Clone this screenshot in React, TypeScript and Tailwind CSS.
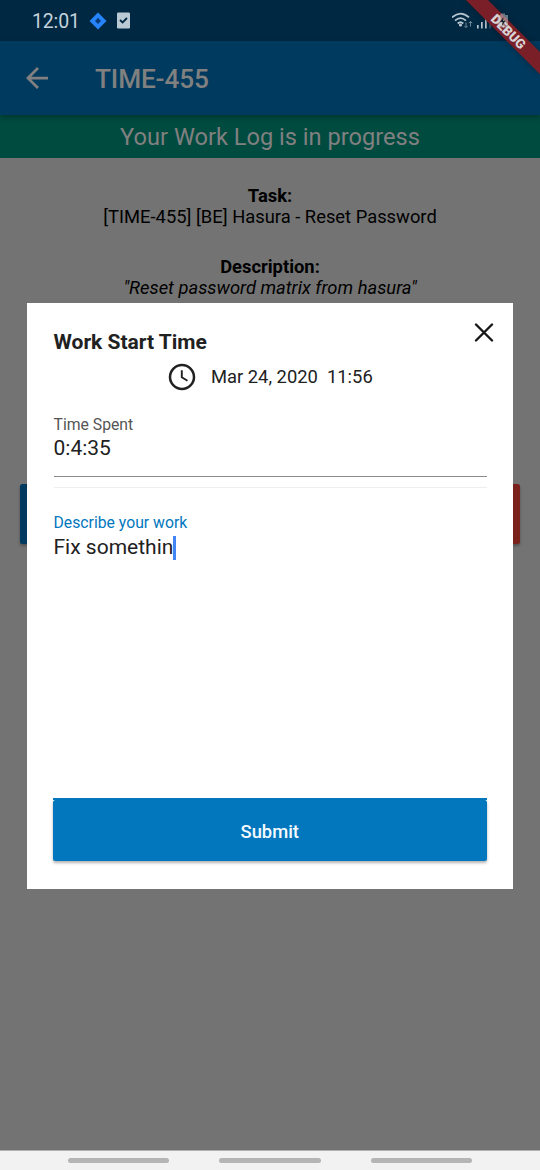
import React from "react";

function StatusBar() {
  return (
    <div className="flex h-[41px] items-center bg-[#002842] pl-8 pr-[28px] text-[#c4d2db]">
      <span className="w-[57px] pt-[3px] text-[19.5px] leading-none tracking-[-0.15px]">12:01</span>
      <svg width="18" height="18" viewBox="0 0 18 18">
        <path d="M9 .5 17.5 9 9 17.5 .5 9Z" fill="#2684ff" />
        <path d="M9 5.8 12 9 9 12 6 9Z" fill="#0a3c78" />
      </svg>
      <svg className="ml-[10px]" width="13" height="17" viewBox="0 0 13 17">
        <rect width="13" height="16" y="0.5" rx="1.3" fill="#b9cad5" />
        <path d="m3 8 2.6 2.5L10 6" fill="none" stroke="#002842" strokeWidth="1.8" />
      </svg>
      <svg className="ml-auto" width="60" height="20" viewBox="0 0 60 20">
        <g fill="none" stroke="#b5c4ce" strokeWidth="1.8">
          <path d="M0 6.400Q8.500 -1.200 17 6.400" />
          <path d="M3 9.700Q8.500 4.600 14 9.700" />
          <path d="M5.700 12.500Q8.500 10 11.300 12.500" />
        </g>
        <circle cx="8.500" cy="14" r="1.600" fill="#b5c4ce" />
        <path d="M14 11.500v5m-1.700-1.700 1.700 1.800 1.700-1.800M18.500 15.500v-5m-1.700 1.700 1.700-1.800 1.700 1.800" fill="none" stroke="#708797" strokeWidth="1" />
        <g fill="#b5c4ce">
          <rect x="25" y="14" width="1.700" height="3.500" />
          <rect x="29" y="11" width="1.700" height="6.500" />
          <rect x="33" y="7.500" width="1.700" height="10" />
          <rect x="37.500" y="3.500" width="1.200" height="14" fill="#526a7a" />
        </g>
      </svg>
    </div>
  );
}

function AppBar() {
  return (
    <div className="relative z-10 flex h-[74px] items-center bg-[#003a5e] pl-[26px] text-[#808080] shadow-[0_3px_5px_rgba(0,0,0,0.25)]">
      <svg width="22" height="22" viewBox="4 4 16 16" fill="#808080">
        <path d="M20 11H7.830l5.590-5.590L12 4l-8 8 8 8 1.410-1.410L7.830 13H20v-2z" />
      </svg>
      <h1 className="ml-[47px] pt-[3px] text-[26.250px] font-medium leading-none tracking-[-0.150px]">TIME-455</h1>
    </div>
  );
}

function DebugRibbon() {
  return (
    <svg className="absolute right-0 top-0 z-20" width="90" height="90" viewBox="0 0 90 90">
      <path d="M15.800 0H38L90 52V74.200Z" fill="#000" opacity="0.3" className="blur-[3px]" />
      <path d="M15.800 0H38L90 52V74.200Z" fill="#7a1f28" />
      <text
        x="58.450"
        y="36.300"
        transform="rotate(45 58.450 31.550)"
        textAnchor="middle"
        fill="#d8d3d5"
        fontSize="13.400"
        fontWeight="900"
        fontFamily="Roboto, sans-serif"
      >
        DEBUG
      </text>
      <path d="M47.500 15h3v-1.500h4.500V15h3v12.500h-10.500z" fill="#c9cdd0" opacity="0.5" />
      <path d="m53.500 17-3.500 5h2.500l-.5 4 3.500-5.200h-2.500z" fill="#14212b" />
    </svg>
  );
}

function WorkLogDialog() {
  return (
    <div className="absolute inset-0 z-30 px-[27px] pt-[303px]">
      <section className="flex h-[586px] flex-col bg-white px-[26.500px] pb-7 text-[#212121]">
        <header className="flex justify-between">
          <h2 className="pt-[28px] text-[21px] font-bold leading-[22px]">Work Start Time</h2>
          <svg className="-mr-[7px] mt-[19px]" width="20" height="20" viewBox="0 0 20 20">
            <path d="m2 2.500 16 16M18 2.500 2 18.500" stroke="#171717" strokeWidth="2.400" strokeLinecap="round" />
          </svg>
        </header>
        <div className="mt-[9px] flex h-[30px] items-center pl-[114.500px]">
          <svg width="28" height="28" viewBox="0 0 28 28" fill="none" stroke="#212121">
            <circle cx="14" cy="14" r="12" strokeWidth="2.500" />
            <path d="M13.800 7.300v7l5.700 3.500" strokeWidth="1.900" />
          </svg>
          <span className="ml-[15px] whitespace-pre pt-px text-[18.375px] leading-none">Mar 24, 2020  11:56</span>
        </div>
        <div className="mt-[22px] h-[63px] border-b border-[#8c8c8c]">
          <div className="pt-[2px] text-[15.750px] leading-[18px] text-[#555]">Time Spent</div>
          <div className="mt-[2px] text-[21px] leading-[25px]">0:4:35</div>
        </div>
        <div className="mt-[10px] h-px bg-[#eee]" />
        <div className="mt-[26px] text-[15.750px] leading-[18px] text-[#0277bd]">Describe your work</div>
        <div className="mt-[3px] flex items-center text-[21px] leading-[25px]">
          Fix somethin
          <span className="h-[24px] w-[2.500px] bg-[#4285f4]" />
        </div>
        <div className="-ml-[0.500px] mt-auto h-[2px] bg-[#0277bd]" />
        <button className="-ml-[0.500px] h-[61px] rounded-[2.500px] bg-[#0277bd] pt-[2px] text-[18.375px] font-medium text-[#f5faff] shadow-[0_2px_3px_rgba(0,0,0,0.3)]">
          Submit
        </button>
      </section>
    </div>
  );
}

export default function App() {
  return (
    <div className="relative flex h-[1170px] w-[540px] flex-col overflow-hidden bg-[#737373] font-['Roboto',sans-serif]">
      <StatusBar />
      <AppBar />
      <DebugRibbon />
      <div className="flex h-[43px] items-center justify-center bg-[#004b40] pt-[2px] text-[23.625px] leading-none text-[#808080]">
        Your Work Log is in progress
      </div>
      <main className="flex flex-1 flex-col text-center text-[18.375px] leading-[21px] text-black">
        <div className="mt-[27px] font-bold">Task:</div>
        <div>[TIME-455] [BE] Hasura - Reset Password</div>
        <div className="mt-[29px] font-bold">Description:</div>
        <div className="italic">"Reset password matrix from hasura"</div>
        <div className="mt-[186px] flex justify-between px-5">
          <div className="h-[60px] w-[200px] rounded-[2.500px] bg-[#003a5e] shadow-[0_2px_3px_rgba(0,0,0,0.3)]" />
          <div className="h-[60px] w-[200px] rounded-[2.500px] bg-[#7a211c] shadow-[0_2px_3px_rgba(0,0,0,0.3)]" />
        </div>
      </main>
      <nav className="flex h-5 items-center justify-center gap-[50px] border-t border-[#b0b0b0] bg-[#f2f2f2]">
        <span className="h-[5px] w-[101.500px] rounded-full bg-[#b5b5b5]" />
        <span className="h-[5px] w-[101.500px] rounded-full bg-[#b5b5b5]" />
        <span className="h-[5px] w-[101.500px] rounded-full bg-[#b5b5b5]" />
      </nav>
      <WorkLogDialog />
    </div>
  );
}
